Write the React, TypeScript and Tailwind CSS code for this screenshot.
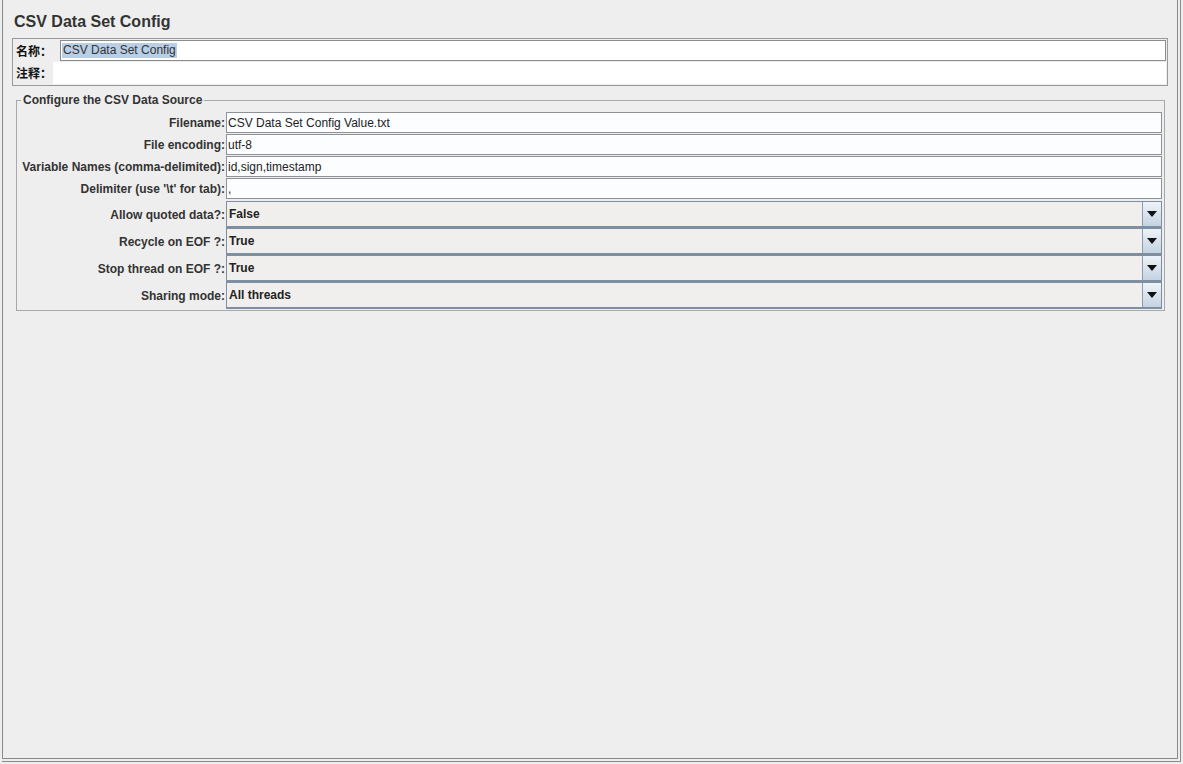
import React from "react";

const textRows = [
  { label: "Filename:", value: "CSV Data Set Config Value.txt" },
  { label: "File encoding:", value: "utf-8" },
  { label: "Variable Names (comma-delimited):", value: "id,sign,timestamp" },
  { label: "Delimiter (use '\\t' for tab):", value: "," },
];

const comboRows = [
  { label: "Allow quoted data?:", value: "False" },
  { label: "Recycle on EOF ?:", value: "True" },
  { label: "Stop thread on EOF ?:", value: "True" },
  { label: "Sharing mode:", value: "All threads" },
];

function Arrow() {
  return (
    <svg width="10" height="6" viewBox="0 0 10 6">
      <path d="M0 0 L10 0 L5 6 Z" fill="#111" />
    </svg>
  );
}

export default function App() {
  return (
    <div className="w-[1183px] h-[764px] bg-[#eeeeee] text-[12px] text-[#222] font-['Liberation_Sans',Arial,sans-serif]">
      <div className="ml-[2px] w-[1179px] h-[762px] border-r border-b border-[#8a8a8a]">
        <div className="w-[1176px] h-[759px] border-l border-r border-b border-[#8a8a8a] flex flex-col">
          <div className="ml-[11px] mt-[12px] h-[20px] leading-[20px] text-[16px] font-bold text-[#333]">
            CSV Data Set Config
          </div>

          <div className="ml-[9px] mt-[6px] w-[1156px] h-[48px] border border-[#9a9a9a] flex flex-col pt-[1px] pr-[1px]">
            <div className="flex h-[21px] items-center">
              <div className="w-[47px] shrink-0 whitespace-nowrap pl-[3px] text-[12px] font-bold font-['Noto_Sans_CJK_SC','Liberation_Sans',sans-serif] leading-[21px] text-[#111]">名称：</div>
              <div className="flex-1 h-[21px] border border-[#8c8c8c] bg-white flex items-center pl-[1px]">
                <span className="bg-[#b8cfe5] text-[#333] leading-[15px] px-[1px]">CSV Data Set Config</span>
              </div>
            </div>
            <div className="flex h-[22px] mt-[1px] items-center">
              <div className="w-[40px] shrink-0 whitespace-nowrap pl-[3px] text-[12px] font-bold font-['Noto_Sans_CJK_SC','Liberation_Sans',sans-serif] leading-[22px] text-[#111]">注释：</div>
              <div className="flex-1 h-[22px] bg-white" />
            </div>
          </div>

          <fieldset className="ml-[13px] mt-[7px] w-[1149px] border border-[#a8a8a8] pt-[5px] pb-[1px] pr-[2px]">
            <legend className="ml-[4px] px-[2px] font-bold leading-[14px] text-[#333]">
              Configure the CSV Data Source
            </legend>
            <div className="grid grid-cols-[209px_1fr]">
              {textRows.map((r) => (
                <React.Fragment key={r.label}>
                  <div className="h-[22px] flex items-center justify-end pr-[1px] font-bold text-[#333]">
                    {r.label}
                  </div>
                  <div className="h-[22px] pb-[1px]">
                    <div className="h-[21px] border border-[#8e9196] bg-[#fbfdff] flex items-center pl-[1px] text-[#222]">
                      {r.value}
                    </div>
                  </div>
                </React.Fragment>
              ))}
              {comboRows.map((r, i) => (
                <React.Fragment key={r.label}>
                  <div className={`h-[27px] flex items-center justify-end pr-[1px] font-bold text-[#333] ${i === 0 ? "mt-[1px]" : ""}`}>
                    {r.label}
                  </div>
                  <div className={`h-[27px] flex border border-b-2 border-[#7d8fa1] bg-[#f1efed] ${i === 0 ? "mt-[1px]" : ""}`}>
                    <div className="flex-1 flex items-center pl-[2px] font-bold text-[#222]">{r.value}</div>
                    <div className="w-[19px] border-l border-[#8a9cae] bg-gradient-to-b from-[#eef3f8] to-[#c4d3e2] flex items-center justify-center">
                      <Arrow />
                    </div>
                  </div>
                </React.Fragment>
              ))}
            </div>
          </fieldset>
        </div>
      </div>
    </div>
  );
}
